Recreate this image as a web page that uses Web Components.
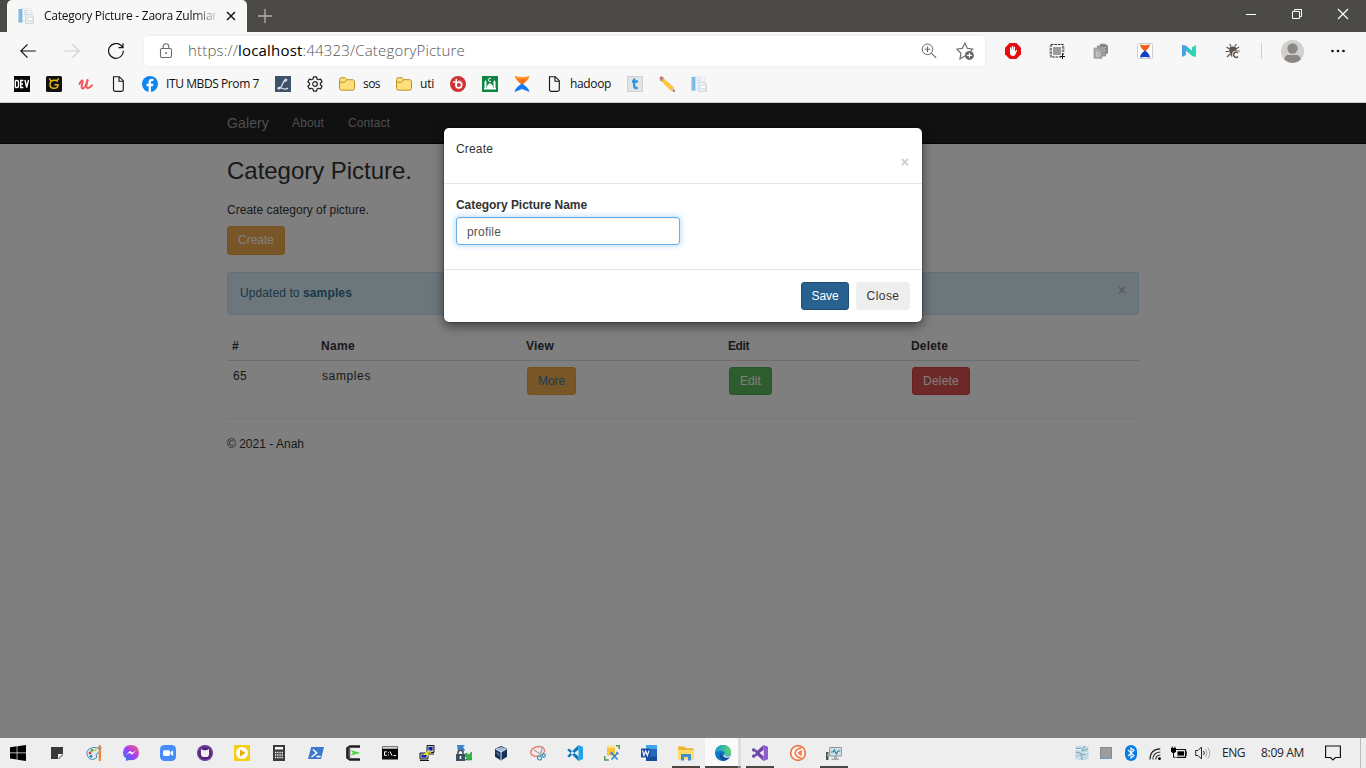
<!DOCTYPE html>
<html lang="en">
<head>
<meta charset="utf-8">
<title>Category Picture</title>
<style>
html,body{margin:0;height:100%;overflow:hidden}
body{font:12px/17px "Liberation Sans",Arial,sans-serif;color:#333}
</style>
</head>
<body>
<desktop-shell></desktop-shell>
<script>
const ICONS = {
doc:`<path d="M.5 1h4v13.500h-4z" fill="#6db0dc"/><path d="M1.500 2h1v11.500h-1z" fill="#a3d0ed"/><path d="M4.500 0h7l2.500 3v10H4.500z" fill="#f1f4f7" stroke="#d5dce3" stroke-width=".6"/><path d="M6 2.500h4M6 4.500h3M6 6.500h1.500" stroke="#c6d2de" stroke-width=".8"/><path d="M7.500 6h5l3 2.500v7h-8z" fill="#e7ecf1" stroke="#c3cdd8" stroke-width=".6"/><path d="M9.500 9.500h5v3h-5z" fill="#fff" stroke="#ccd5de" stroke-width=".6"/>`,
dev:`<path d="M0 0h16v16H0z" fill="#080808"/><path d="M1.300 4.500v7M1.300 4.500h1.500q1.700 0 1.700 1.500v4q0 1.500-1.700 1.500H1.300M9.300 4.500H6.700v7h2.600M6.700 8H9M11 4l1.700 7.500L14.500 4" fill="none" stroke="#fff" stroke-width="1.400"/>`,
gold:`<rect width="16" height="16" rx="1.500" fill="#111"/><path d="M11.800 5.500Q10.800 4.300 8.500 4.300 4 4.300 4 8.500q0 3.800 4 3.800t4-3.600H8.500M3.300 2.300l1.500 2.500M12.700 2.300l-1.500 2" fill="none" stroke="#e9b816" stroke-width="1.400"/>`,
udemy:`<path d="M1.500 8Q3.500 4 4.500 4.500 5.300 5 4 8.500 3 12.500 4.800 12.500 7.500 12 9.500 4.500" fill="none" stroke="#ee5b60" stroke-width="2" stroke-linecap="round"/><path d="M9.500 4Q7.300 12 9.500 12.300 11.700 12 14 9.300" fill="none" stroke="#ee5b60" stroke-width="2" stroke-linecap="round"/>`,
page:`<path d="M3.500.7h5.800l4 4v8.800q0 1.800-1.800 1.800h-6q-2 0-2-1.800zM9 .7v4.500h4.300" fill="none" stroke="#191919" stroke-width="1.150"/>`,
fb:`<circle cx="8" cy="8" r="8" fill="#0e85f2"/><path d="M8.900 16v-5.800h2.100l.4-2.400H8.900V6.300q0-1.200 1.400-1.200h1.200V3q-4.700-.9-4.900 2.900v1.900H4.500v2.400h2.100V16z" fill="#fff"/>`,
liq:`<path d="M0 0h16v16H0z" fill="#405269"/><path d="M9.500 5.500Q12 5 11.700 3.500 11 2.500 9.300 4.500 7.500 8 6 11.300 4.500 13.500 3 12.700q-.5-1.500 2-1.200l4 1.500q2.500.3 4-1" fill="none" stroke="#dfe5ea" stroke-width="1.200"/>`,
gear:`<path d="M6.500.8h3l.5 2.200 1.400.8 2.200-.7 1.500 2.600-1.700 1.500v1.600l1.700 1.500-1.500 2.600-2.200-.7-1.400.8-.5 2.200h-3L6 13l-1.400-.8-2.200.7-1.500-2.600 1.700-1.500V7.200L.9 5.700l1.500-2.600 2.200.7L6 3z" fill="none" stroke="#222" stroke-width="1.200" stroke-linejoin="round"/><circle cx="8" cy="8" r="2.300" fill="none" stroke="#222" stroke-width="1.200"/>`,
folder:`<path d="M.6 3.500Q.6 1.700 2.300 1.700H6l2 2h5.500q2 0 2 2v6.500q0 2-2 2h-11q-2 0-2-2z" fill="#ffdf7b" stroke="#bd9220"/><path d="M.7 6.200H5.500L8 3.800" fill="none" stroke="#bd9220"/>`,
bred:`<circle cx="8" cy="8" r="8" fill="#d13234"/><path d="M3 6h2.500M6.300 2.800V10" fill="none" stroke="#fff" stroke-width="1.500"/><circle cx="8.800" cy="9" r="2.900" fill="none" stroke="#fff" stroke-width="1.600"/><path d="M8.500 4.500q3.500 0 4 3.500" stroke="#f5abab" fill="none"/>`,
mosque:`<path d="M0 0h16v16H0z" fill="#0b8743"/><path d="M2.500 13V6l1-2 1 2v7zM11.500 13V6l1-2 1 2v7zM2 13.500v-1.500h12v1.500zM5 12.500V10.500q.2-2 3-3.500 2.800 1.500 3 3.500v2z" fill="#fff"/><path d="M9 2.500a1.700 1.700 0 1 0 0 2.700" stroke="#fff" fill="none"/>`,
xf:`<path d="M.5 0q4 1 7.500 1 4 0 7.500-1Q15 4 8 9 1.500 4 .5 0" fill="#fb9828"/><path d="M2 2l6 7 6-7-3 1H5z" fill="#f56f22"/><path d="M.5 16q1-4.500 7.500-8.500Q15 12 15.500 16L8 13z" fill="#1678f3"/>`,
tt:`<path d="M.5.500h15v15H.5z" fill="#e4e4e4" stroke="#d0d0d0"/><path d="M7.200 2.500v7.500q0 2 2 2h1.500M5 5.500h6" fill="none" stroke="#2a97df" stroke-width="2.300"/>`,
pencil:`<path d="M3.500 1.300L14.500 11l.9 4-4-.6L1.200 4z" fill="#fbc63d"/><path d="M.7 3Q.2.800 2.500.3l2 1.500-2.800 3z" fill="#e8576b"/><path d="M3.700 1.300l1.300 1.200L2.300 5.500.9 4.200z" fill="#92a2ad"/><path d="M14.500 11l1.300 4.500-4.400-1z" fill="#eac498"/><path d="M15 13.500l.9 2.300-2.300-.5z" fill="#333"/>`,
back:`<path d="M15.800 8H.8m6.700-6.700L.8 8l6.700 6.700" fill="none" stroke="#111" stroke-width="1.200"/>`,
fwd:`<path d="M.2 8h15M8.500 1.300L15.200 8l-6.700 6.700" fill="none" stroke="#cdcdcd" stroke-width="1.100"/>`,
reload:`<path d="M15.400 7.700a7.400 7.400 0 1 1-2.300-5.200l1.800 1.900M15 .2v4.500h-4.500" fill="none" stroke="#111" stroke-width="1.200"/>`,
lock:`<rect x="2.500" y="5.500" width="11" height="9" rx="1.500" fill="none" stroke="#6b6b6b" stroke-width="1.100"/><path d="M5.200 5.500V3.600a2.800 2.800 0 0 1 5.600 0v1.900" fill="none" stroke="#6b6b6b" stroke-width="1.100"/><circle cx="8" cy="10" r="1" fill="#6b6b6b"/>`,
mag:`<circle cx="6.500" cy="6.300" r="5.300" fill="none" stroke="#666"/><path d="M10.500 10.300l4.700 4.600M3.700 6.300h5.600M6.500 3.500v5.600" stroke="#666" stroke-width="1.100"/>`,
star:`<path d="M7.700 12.500L3.500 15l.9-5L.7 6.300l5-.7L7.900 1l2.100 4.600 5 .7-2 1.700" fill="none" stroke="#666"/><circle cx="11.900" cy="11.900" r="4" fill="#666"/><path d="M11.900 9.700v4.400M9.700 11.900h4.400" stroke="#fff"/>`,
block:`<path d="M4.700 0h6.600L16 4.700v6.600L11.300 16H4.700L0 11.300V4.700z" fill="#e60d10"/><path d="M5 5.200q0-1 .7-1t.7 1V7h.4V3.700q0-.8.7-.8t.7.800V7h.4V4.200q0-.8.7-.8t.7.800v4h.5l.7-1.300q.8-.5 1 .3l-1.500 3.600Q9.900 13 8.200 13 5 13 5 9.800z" fill="#fff"/>`,
capt:`<rect x="4" y="4" width="8" height="8" fill="#9b9b9b"/><path d="M2 1.500V14h10M2 1.500h12V12" stroke="#333" stroke-width="1.200" fill="none" stroke-dasharray="2.600 .8"/><path d="M.4 3.500v9M15.600 3.500v6" stroke="#bbb" stroke-width=".8"/><path d="M13.500 10.500v5.500M11 13.500h5" stroke="#111"/>`,
stack:`<path d="M7 .8h5l3 2v8H7z" fill="#888"/><path d="M4.500 3h5l3 2v8h-8z" fill="#a0a0a0" stroke="#777" stroke-width=".7"/><path d="M1 5h5l3 2.500v7.700H1z" fill="#aaa" stroke="#8c8c8c" stroke-width=".7"/><path d="M3.500 9v4.500q3 0 3-2.200T3.500 9z" fill="none" stroke="#ccc"/><path d="M12 4v1m0 2v1" stroke="#ddd"/>`,
hour:`<rect x=".5" y=".5" width="15" height="15" rx="1" fill="#fff" stroke="#ccc"/><path d="M3 1.500q5 1.500 10 0Q12.500 5 8 8.500 3.300 5 3 1.500" fill="#f45d18"/><path d="M3 14.500Q3.500 10.500 8 7.500q4.500 3 5 7-5-1-10 0" fill="#123fc7"/>`,
nn:`<defs><linearGradient id="g"><stop stop-color="#4b9bea"/><stop offset="1" stop-color="#21e6a2"/></linearGradient></defs><path d="M1 2l4 .5 6 5.200V4.200l4-2.200v12l-3.500-.8L5 7.800V12l-4 2z" fill="url(#g)"/>`,
bug:`<path d="M5 3.500h5.500l1 3-1.500 7H6L4 7z" fill="#5d544e"/><path d="M6 3L4.500 1M10 3l1.500-2M4.500 6L1.500 4M4.500 8.500H.5M5 11l-3 3M11 6l3-2M10.500 8h4.500" stroke="#5d544e" stroke-width="1.200"/><circle cx="11" cy="11.700" r="4" fill="#f7f7f7"/><path d="M13 9.800a2.600 2.600 0 1 0 0 3.800" fill="none" stroke="#5d544e" stroke-width="1.500"/>`,
avatar:`<circle cx="8" cy="8" r="8" fill="#d2d0ce"/><circle cx="8" cy="5.900" r="3.600" fill="#8a8785"/><path d="M2.200 13.500Q3 10.500 5 10.500h6q2 0 2.800 3Q8 18.500 2.200 13.500" fill="#8a8785"/>`,
dots:`<circle cx="2.500" cy="8" r="1.350" fill="#111"/><circle cx="8" cy="8" r="1.350" fill="#111"/><circle cx="13.500" cy="8" r="1.350" fill="#111"/>`,
min:`<path d="M3 8.500h10" stroke="#fff"/>`,
max:`<path d="M3.500 5.500h7v7h-7zM5.500 5V3.500h7v7H11" fill="none" stroke="#fff"/>`,
cls:`<path d="M3 3l10 10M13 3L3 13" stroke="#fff" stroke-width="1.150"/>`,
tabx:`<path d="M4 4l8 8M12 4l-8 8" stroke="#191919" stroke-width="1.500"/>`,
plus:`<path d="M8 1v14M1 8h14" stroke="#b4b3b2" stroke-width="1.300"/>`,
win:`<path d="M0 2.300l6.700-1v6.200H0zM7.400 1.200L16 0v7.500H7.400zM0 8.300h6.700v6.200L0 13.600zM7.400 8.300H16V16l-8.600-1.300z"/>`,
note:`<path d="M2 2h12v8l-4 4H2z" fill="#3a3a3a"/><path d="M9 14V9h5z" fill="#ededed"/>`,
paint:`<path d="M1 9Q0 4 7 2.500q7-.5 6.500 4-1 2-3 2.300-1 .7.300 2.200 1 2.500-4 3.500Q2 14.500 1 9" fill="#d9edf6" stroke="#4693b7"/><circle cx="4" cy="8" r="1.400" fill="#e83e37"/><circle cx="6" cy="5.300" r="1.400" fill="#42a648"/><circle cx="9.300" cy="5" r="1.300" fill="#eec22c"/><circle cx="5" cy="11.300" r="1.400" fill="#3273d1"/><path d="M12 4q0-4 2.500-4l1 3-1 3z" fill="#bd8a55"/><path d="M12.700 6l2.500-.5-.5 10.500h-2z" fill="#f1842d"/>`,
mess:`<defs><linearGradient id="g" x1="0" y1="1" x2="1" y2="0"><stop stop-color="#1c82ff"/><stop offset=".5" stop-color="#a23cf3"/><stop offset="1" stop-color="#ff666c"/></linearGradient></defs><path d="M8 0q8 .3 8 7.700-.2 7.300-8 7.500l-2-.3L3 16v-2.700Q0 11.500 0 7.500.3.300 8 0" fill="url(#g)"/><path d="M3 10l4-4.300 2.300 2L13 5.500l-4 4.300-2.300-2z" fill="#fff"/>`,
zoom:`<rect width="16" height="16" rx="4.500" fill="#468dfb"/><rect x="3" y="5.300" width="7" height="5.600" rx="1.300" fill="#fff"/><path d="M10.600 7l2.500-1.700v5.600l-2.500-1.700z" fill="#fff"/>`,
git:`<circle cx="8" cy="8" r="8" fill="#6d3791"/><circle cx="8" cy="8.300" r="6" fill="#4e2277"/><path d="M4 4l2.500 1.200h3L12 4q.8 7.500-1.700 8H5.700Q3.200 11.500 4 4" fill="#f3eef4"/>`,
play:`<rect width="16" height="16" rx="1" fill="#f4cf16"/><circle cx="8" cy="8" r="6" fill="#fff"/><path d="M6 4.500v7L11.500 8z" fill="#e3ad08"/>`,
calc:`<path d="M2 0h12v16H2z" fill="#3b3b3b"/><path d="M4 2h8v2.500H4z" fill="#fff"/><path d="M4 7.500h8M4 10h8M4 12.500h8" stroke="#fff" stroke-width="1.300" stroke-dasharray="1.300 .9"/>`,
ps:`<path d="M3.200 2H16l-3 12H0z" fill="#3c78cb"/><path d="M5 4.500L8.700 8l-5.200 4M8.500 11.500h4" fill="none" stroke="#fff" stroke-width="1.500"/>`,
cmder:`<path d="M15 1.500H5L2.500 3.500v9l2.500 2h10" fill="none" stroke="#202020" stroke-width="2.700"/><path d="M4.500 2v12" stroke="#555" stroke-width="1.500"/><path d="M5.500 5L15.500 8 5.500 10.500l2.500-2.500z" fill="#42da35"/>`,
cmd:`<path d="M0 1.500h16v13H0z" fill="#090909"/><path d="M.5 2h15v1.800H.5z" fill="#d4d4d4"/><path d="M4.800 6.800H2.500v3.500h2.300M6.500 7.300v.8m0 1.500v.8M8 6.500l2 4M11.500 10.500h2.500" fill="none" stroke="#fff"/>`,
putty:`<path d="M8 .5h7v7H8zM1 8h8v6H1z" fill="#c6c6bd" stroke="#171717"/><path d="M9.500 2h4v3.500h-4zM2.500 9.500h5v3h-5z" fill="#0714b8"/><path d="M11.500 3.500L3.500 10.500l5-1-1 3 5-5.500-4 .5z" fill="#f4ef1b"/><path d="M1 15.500h9M9.500 9H15" fill="none" stroke="#171717"/>`,
sync:`<path d="M1 0h8l-2 2 2 3-2 2-3-3-2 3z" fill="#3e84d2"/><path d="M15.500 7v8H9l2-2-3-3 2-2 3 2z" fill="#36b34c" stroke="#168432" stroke-width=".6"/><path d="M2 9V7q2.500-4 5 0v2" fill="none" stroke="#434a53" stroke-width="1.500"/><path d="M0 9h9v7H0z" fill="#3d5065"/><path d="M4.500 11v3" stroke="#fff" stroke-width="1.500"/>`,
vbox:`<path d="M8 1l6 2.700v8L8 15.500 2 11.700v-8z" fill="#16315c"/><path d="M2.500 3.800L8 2l5.500 1.800L8 7z" fill="#a4bdd6"/><path d="M8 7v8M2.500 4L8 7l5.500-3" fill="none" stroke="#e2edf5"/><path d="M4 7.500l2 3" stroke="#8aaccb"/>`,
snip:`<ellipse cx="7.500" cy="6.300" rx="7" ry="4.700" transform="rotate(-15 8 6)" fill="#f9e8e6" stroke="#e57976" stroke-width="1.300"/><path d="M4 5l8 5M12.500 1.500L10.500 9" stroke="#9aa9b2" stroke-width="1.300"/><circle cx="9.500" cy="13" r="2" fill="none" stroke="#3299bd" stroke-width="1.200"/><circle cx="13.800" cy="10.500" r="1.600" fill="none" stroke="#3299bd" stroke-width="1.200"/>`,
code:`<path d="M11.500 0L16 2v12l-4.500 2z" fill="#23a5ee"/><path d="M11.500 0v4.600L2 12.500.3 11zM11.500 16v-4.600L2 3.500.3 5z" fill="#087abf"/>`,
ssms:`<path d="M3 1.500h8v9H3z" fill="#f6c237"/><ellipse cx="7" cy="1.800" rx="4" ry="1.500" fill="#ffe28a"/><path d="M12 .8h3.200V4M.8 11v4h4" fill="none" stroke="#4b9b4c" stroke-width="1.500"/><path d="M7.500 8l6 6.500M13.500 8l-6 6.500M6.500 9l2-2M12.500 7l2 2" stroke="#3386c8" stroke-width="1.600"/>`,
word:`<path d="M5 0h11v16H5z" fill="#2369bd"/><path d="M5 0h11v4H5z" fill="#43a5ed"/><path d="M5 11.500h11V16H5z" fill="#164a9a"/><path d="M0 3.500h9.500v9H0z" fill="#174ea6"/><path d="M1.500 5.500l1.500 5 1.700-4.500 1.700 4.500 1.600-5" fill="none" stroke="#fff" stroke-width="1.100"/>`,
explorer:`<path d="M0 1.500h6.500L8 3.300h7.500v11H0z" fill="#edb62c"/><path d="M0 5h16v9H0z" fill="#ffdc6c"/><path d="M3 15.500V9h10v6.500h-3V12H6v3.500z" fill="#438cd0"/>`,
edge:`<defs><linearGradient id="g"><stop stop-color="#159cd8"/><stop offset="1" stop-color="#64d36b"/></linearGradient></defs><circle cx="8" cy="8" r="8" fill="#087ac9"/><path d="M0 7.800C1 2 4 0 8 0q7 .4 8 6.300.3 4.500-4.200 4.800-3.500-.2-2-3Q7.500 3.500 0 7.800" fill="url(#g)"/><path d="M6.500 7q-2 6 7.800 5.500Q11 16.500 7 15.500 2.500 11.500 6.500 7" fill="#174b9b"/><path d="M9.500 8.800q-.2 3 3 2.700 3 0 3.500-3-.3 4-3.500 4.200-6 0-3-3.900" fill="#edf6f7"/>`,
vs:`<path d="M11.500 0L16 1.700v12.600L11.500 16z" fill="#8f5cd1"/><path d="M11.500 0v5L2 13 0 12V4l2-1 9.500 8v5L0 5.500v5z" fill="#7047af"/><path d="M2 6v4l2-2zM11.500 5L8 8l3.500 3z" fill="#eee"/>`,
post:`<circle cx="8" cy="8" r="7.300" fill="#fff6ef" stroke="#ee6d3c" stroke-width="1.500"/><path d="M11.500 3Q6 3.500 5 8q1 4.500 6.500 5M11 6L8.500 8 11 10z" fill="none" stroke="#ee6d3c" stroke-width="1.300"/>`,
monitor:`<path d="M3.700 2.500h12v8.500h-12z" fill="#d6dfe3" stroke="#8b969a"/><path d="M5 7h2l1.300-2 2 4 1.700-3h2.500" fill="none" stroke="#2383ab" stroke-width="1.200"/><path d="M8 11v2.500H5.500V15H13v-1.500h-2V11" fill="#a3abad"/><path d="M0 7h2.500v8H0z" fill="#4e585b"/><path d="M1 9h1v2H1z" fill="#64c66b"/>`,
server:`<path d="M1 2q7-3 14 0l-1 3 1 3-1 3 1 2.500q-7 3.500-14 0L2 11 1 8l1-3z" fill="#c4dbe5"/><path d="M2 3l6 1v2l6-2M2 7l5 1.500v2L14 8M2 11l6 1v3M11 1l-2 3" fill="none" stroke="#759faf"/><path d="M3 4.500h4v1.500M10 8h4M3 12h4" stroke="#eefaff" fill="none"/>`,
sq:`<path d="M2.500 2.500h11v11h-11z" fill="#9c9c9c" stroke="#8a8a8a"/><path d="M2.500 13.500h11" stroke="#5da3d4"/>`,
bt:`<rect x="2" width="12" height="16" rx="6" fill="#087de7"/><path d="M5 5l6 5.700L8 13V3l3 2.300L5 11" fill="none" stroke="#fff" stroke-width="1.100"/>`,
wifi:`<g transform="translate(0)"><circle cx="12.500" cy="13.700" r="1.400"/><path d="M8.800 14.500q0-4.200 4.500-4.500M5.900 14.500Q5.900 7.500 13.300 7M3 14.500Q3 4.300 13.300 3.900" fill="none" stroke="#222" stroke-width="1.100"/></g>`,
battery:`<path d="M3.500 4.500h11v7.800h-9M14.500 7H16v3h-1.500" fill="none" stroke="#111" stroke-width="1.200"/><path d="M6.500 6.300H13v4.300H6.500z"/><path d="M0 3h5v3.500L3.500 8h-2L0 6.500z"/><path d="M1.200 1.500v2m2.600-2v2M2.500 8v4.300h2" fill="none" stroke="#111"/>`,
sound:`<path d="M.7 5.500H3L6.500 2v12L3 10.500H.7z" fill="none" stroke="#222"/><path d="M8.500 6q1.800 2 0 4" fill="none" stroke="#222"/><path d="M10.500 4q3 4 0 8M12.800 2.500q4 5.500 0 11" fill="none" stroke="#aaa"/>`,
notif:`<path d="M.6 1h14.800v11.500H10.500L8 15l-2.500-2.500H.6z" fill="none" stroke="#111" stroke-width="1.150"/>`
};

class UiIcon extends HTMLElement {
  connectedCallback() {
    const size = this.getAttribute('size') || 16;
    this.attachShadow({mode: 'open'}).innerHTML =
      `<style>:host{display:block;flex:none;width:${size}px;height:${size}px}svg{display:block}</style>
      <svg width="${size}" height="${size}" viewBox="0 0 16 16">${ICONS[this.getAttribute('name')] || ''}</svg>`;
  }
}
customElements.define('ui-icon', UiIcon);

/* One line of text whose tracking is set so that it spans the width in "w". */
class UiText extends HTMLElement {
  connectedCallback() {
    const root = this.attachShadow({mode: 'open'});
    root.innerHTML = `<style>:host{display:inline-block;white-space:nowrap;flex:none}</style><span><slot></slot></span>`;
    const w = +this.getAttribute('w');
    if (!w) return;
    const span = root.querySelector('span');
    const natural = span.getBoundingClientRect().width;
    span.style.letterSpacing = ((w - natural) / Math.max(1, this.textContent.length)) + 'px';
    this.style.width = w + 'px';
  }
}
customElements.define('ui-text', UiText);

function define(name, html) {
  const t = document.createElement('template');
  t.innerHTML = html;
  customElements.define(name, class extends HTMLElement {
    constructor() { super(); this.attachShadow({mode: 'open'}).appendChild(t.content.cloneNode(true)); }
  });
}

define('bs-button', `<style>
:host{display:inline-flex;box-sizing:border-box;height:28px;align-items:center;justify-content:center;border:1px solid var(--edge);border-radius:3px;background:var(--fill);color:var(--ink,#fff)}
</style><slot></slot>`);

define('title-bar', `<style>
:host{display:flex;height:32px;background:#4b4a47;align-items:center}
.tab{display:flex;align-items:center;width:240px;height:32px;margin-left:7px;background:#f7f7f7;border-radius:5px 5px 0 0;box-sizing:border-box;padding:0 8px 0 11px}
.name{width:174px;margin:0 6px 0 10px;overflow:hidden;color:#111;font:12px/18px "Open Sans",sans-serif;-webkit-mask-image:linear-gradient(90deg,#000 150px,transparent 176px)}
.plus{margin-left:10px}
.win{margin-left:auto;display:flex;gap:30px;padding-right:15px;margin-top:-4px}
</style>
<div class="tab"><ui-icon name="doc"></ui-icon><div class="name"><ui-text w="173">Category Picture - Zaora Zulmiar</ui-text></div><ui-icon name="tabx"></ui-icon></div>
<ui-icon class="plus" name="plus"></ui-icon>
<div class="win"><ui-icon name="min"></ui-icon><ui-icon name="max"></ui-icon><ui-icon name="cls"></ui-icon></div>`);

define('address-row', `<style>
:host{display:flex;height:38px;background:#f7f7f7;align-items:center;box-sizing:border-box;padding-left:20px}
.nav{display:flex;gap:28px}
.field{display:flex;align-items:center;box-sizing:border-box;width:841px;height:30px;background:#fff;border-radius:4px;margin-left:20px;padding:0 11px 0 14px;box-shadow:0 0 3px #e3e3e3}
.url{margin-left:14px;font:300 15px/22px "Open Sans",sans-serif;color:#000;padding-bottom:2px}.url b{font-weight:400}.url i{font-style:normal;color:#555}
.acts{display:flex;gap:19px;margin-left:auto;align-items:center}
.ext{display:flex;gap:28px;margin-left:20px}
.sep{width:1px;height:16px;background:#ccc;margin:0 19px 0 20px}
.more{margin-left:27px}
</style>
<div class="nav"><ui-icon name="back"></ui-icon><ui-icon name="fwd"></ui-icon><ui-icon name="reload"></ui-icon></div>
<div class="field"><ui-icon name="lock"></ui-icon><ui-text class="url" w="277"><i>https://</i><b>localhost</b><i>:44323/CategoryPicture</i></ui-text>
<div class="acts"><ui-icon name="mag"></ui-icon><ui-icon name="star" size="18"></ui-icon></div></div>
<div class="ext"><ui-icon name="block"></ui-icon><ui-icon name="capt"></ui-icon><ui-icon name="stack"></ui-icon><ui-icon name="hour"></ui-icon><ui-icon name="nn"></ui-icon><ui-icon name="bug"></ui-icon></div>
<div class="sep"></div><ui-icon name="avatar" size="23"></ui-icon><ui-icon class="more" name="dots" style="margin-left:26px"></ui-icon>`);

define('book-mark', `<style>:host{display:flex;align-items:center;gap:8px}</style><slot></slot>`);

define('bookmark-row', `<style>
:host{display:flex;gap:16px;height:33px;box-sizing:border-box;padding:0 14px 5px;background:#f7f7f7;border-bottom:1px solid #cfcfcf;align-items:center;font:12px/17px "Open Sans",sans-serif;color:#111}
</style>
<ui-icon name="dev"></ui-icon><ui-icon name="gold"></ui-icon><ui-icon name="udemy"></ui-icon><ui-icon name="page"></ui-icon>
<book-mark><ui-icon name="fb"></ui-icon><ui-text w="93">ITU MBDS Prom 7</ui-text></book-mark>
<ui-icon name="liq"></ui-icon><ui-icon name="gear"></ui-icon>
<book-mark><ui-icon name="folder"></ui-icon><ui-text w="17">sos</ui-text></book-mark>
<book-mark><ui-icon name="folder"></ui-icon><ui-text w="14">uti</ui-text></book-mark>
<ui-icon name="bred"></ui-icon><ui-icon name="mosque"></ui-icon><ui-icon name="xf"></ui-icon>
<book-mark><ui-icon name="page"></ui-icon><ui-text w="41">hadoop</ui-text></book-mark>
<ui-icon name="tt"></ui-icon><ui-icon name="pencil"></ui-icon><ui-icon name="doc"></ui-icon>`);

define('site-nav', `<style>
:host{display:flex;box-sizing:border-box;height:41px;background:#222;border-bottom:1px solid #080808;color:#9d9d9d;padding:0 227px;align-items:center}
.brand{font-size:14px;margin-right:23px}.a{margin-right:24px}
</style><ui-text class="brand" w="42">Galery</ui-text><ui-text class="a" w="32">About</ui-text><ui-text w="42">Contact</ui-text>`);

define('site-alert', `<style>
:host{display:flex;box-sizing:border-box;height:43px;margin-top:17px;background:#d9edf7;border:1px solid #bce8f1;border-radius:3px;color:#31708f;padding:0 12px;align-items:center}
.x{margin-left:auto;font:bold 14px/16px "Liberation Sans";color:#000;opacity:.2;padding-bottom:7px}
</style><ui-text w="63">Updated to&nbsp;</ui-text><b><ui-text w="49">samples</ui-text></b><span class="x">×</span>`);

define('category-table', `<style>
:host{display:block;margin-top:17px}
.r{display:grid;grid-template-columns:89px 205px 202px 183px 1fr}
.h{height:28px;line-height:28px;font-weight:bold;border-bottom:1px solid #ddd}
.r>*{padding-left:5px}
.b{border-bottom:1px solid #eee;padding-top:6px;height:51px}
.b>*{padding-left:6px;line-height:19px}
bs-button{line-height:17px}
</style>
<div class="r h"><div>#</div><div><ui-text w="34">Name</ui-text></div><div><ui-text w="28">View</ui-text></div><div><ui-text w="21">Edit</ui-text></div><div><ui-text w="37">Delete</ui-text></div></div>
<div class="r b"><div><ui-text w="14">65</ui-text></div><div><ui-text w="49">samples</ui-text></div>
<div><bs-button style="width:49px;--fill:#f0ad4e;--edge:#eea236;--ink:#337ab7"><ui-text w="27">More</ui-text></bs-button></div>
<div><bs-button style="width:43px;--fill:#5cb85c;--edge:#4cae4c"><ui-text w="21">Edit</ui-text></bs-button></div>
<div><bs-button style="width:58px;--fill:#d9534f;--edge:#d43f3a"><ui-text w="36">Delete</ui-text></bs-button></div></div>`);

define('create-dialog', `<style>
:host{display:flex;flex-direction:column;box-sizing:border-box;width:478px;height:194px;background:#fff;border-radius:5px;box-shadow:0 4px 12px rgba(0,0,0,.5),0 0 0 1px rgba(0,0,0,.2)}
header{display:flex;justify-content:space-between;height:55px;box-sizing:border-box;padding:13px 13px 0 12px}
.x{font:bold 14px/18px "Liberation Sans";color:#ccc;margin-top:12px}
main{box-sizing:border-box;height:87px;padding:13px 12px 0;border:solid #e5e5e5;border-width:1px 0}
label{display:block;font-weight:bold}
.in{box-sizing:border-box;width:224px;height:28px;margin-top:3px;padding:6px 10px 4px;border:1px solid #66afe9;border-radius:3px;color:#555;box-shadow:inset 0 1px 1px rgba(0,0,0,.075),0 0 6px rgba(102,175,233,.6)}
footer{display:flex;justify-content:flex-end;gap:7px;padding:12px}
</style>
<header><ui-text w="37">Create</ui-text><span class="x">×</span></header>
<main><label><ui-text w="131">Category Picture Name</ui-text></label><div class="in"><ui-text w="34">profile</ui-text></div></main>
<footer><bs-button style="width:48px;--fill:#286090;--edge:#204d74"><ui-text w="27">Save</ui-text></bs-button><bs-button style="width:54px;--fill:#eee;--edge:#eee;--ink:#333"><ui-text w="33">Close</ui-text></bs-button></footer>`);

define('web-page', `<style>
:host{display:block;position:relative;height:635px;background:#fff;overflow:hidden}
article{padding:0 227px}
h2{margin:11px 0 0;font-size:24px;line-height:32px;font-weight:normal}
p{margin:15px 0 7px}
bs-button{vertical-align:top}
footer{margin-top:17px}
.shade{position:absolute;inset:0;background:rgba(0,0,0,.5);display:flex;justify-content:center;align-items:flex-start;padding-top:25px}
</style>
<site-nav></site-nav>
<article><h2><ui-text w="185">Category Picture.</ui-text></h2>
<p><ui-text w="142">Create category of picture.</ui-text></p>
<bs-button style="width:58px;height:29px;--fill:#f0ad4e;--edge:#eea236"><ui-text w="36">Create</ui-text></bs-button>
<site-alert></site-alert><category-table></category-table>
<footer><ui-text w="77">© 2021 - Anah</ui-text></footer></article>
<div class="shade"><create-dialog></create-dialog></div>`);

class TaskBar extends HTMLElement {
  connectedCallback() {
    const apps = 'note paint mess zoom git play calc ps cmder cmd putty sync vbox snip code ssms word explorer edge vs post monitor'.split(' ');
    const open = {explorer: 1, edge: 1, vs: 1, monitor: 1};
    this.attachShadow({mode: 'open'}).innerHTML = `<style>
:host{display:flex;height:30px;background:#eee;color:#222;font:12px/30px "Open Sans",sans-serif}
.c{display:grid;place-items:center;width:37px;box-sizing:border-box}
.start{width:38px;padding-right:2px}
.open{width:28px;margin:0 5px;border-bottom:2px solid #4b4745;padding-top:2px}
.edge{width:33px;margin:0;background:#fafafa;padding-left:2px}
.gap{width:3px;background:#ddd;border-bottom:2px solid #888;box-sizing:border-box}
.monitor{margin-left:4px}
.tray{display:flex;margin-left:auto;align-items:center}
.tray ui-icon{margin-right:8px}
.tray .eng{margin:0 16px 0 3px}.tray .n{margin:0 19px 0 21px}
.end{width:1px;height:30px;background:#bbb;margin-right:5px}
</style><div class="c start"><ui-icon name="win"></ui-icon></div>` +
      apps.map(a => `<div class="c ${open[a] ? 'open' : ''} ${a}"><ui-icon name="${a}"></ui-icon></div>${a === 'edge' ? '<div class="gap"></div>' : ''}`).join('') +
      `<div class="tray"><ui-icon name="server"></ui-icon><ui-icon name="sq"></ui-icon><ui-icon name="bt" style="margin-left:1px"></ui-icon><ui-icon name="wifi"></ui-icon><ui-icon name="battery"></ui-icon><ui-icon name="sound"></ui-icon><ui-text class="eng" w="23">ENG</ui-text><ui-text w="43">8:09 AM</ui-text><ui-icon class="n" name="notif"></ui-icon><div class="end"></div></div>`;
  }
}
customElements.define('task-bar', TaskBar);

define('desktop-shell', `<style>:host{display:flex;flex-direction:column;width:1366px;height:768px;overflow:hidden}</style>
<title-bar></title-bar><address-row></address-row><bookmark-row></bookmark-row><web-page></web-page><task-bar></task-bar>`);
</script>
</body>
</html>
